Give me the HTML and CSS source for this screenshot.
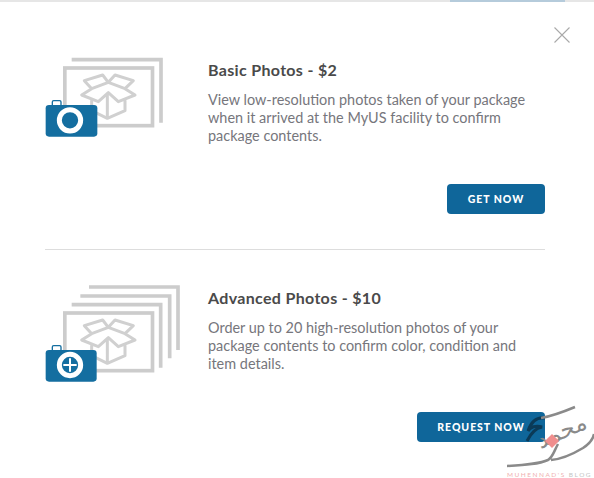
FILE: index.html
```html
<!DOCTYPE html>
<html lang="en">
<head>
<meta charset="utf-8">
<title>Photos</title>
<link rel="stylesheet" href="styles.css">
</head>
<body>
<div class="topbar"><span class="topbar-active"></span></div>
<main class="modal">
  <button class="close" aria-label="Close"><svg width="18" height="18" viewBox="0 0 18 18"><path d="M1.5 1.5 16.500 16.500M16.500 1.5 1.5 16.500" fill="none" stroke="#a9a9a9" stroke-width="1.1"/></svg></button>
  <section class="offer offer-basic">
    <svg class="art" width="120" height="85" viewBox="45 45 360 255">
      <path class="frame" d="M125 59H393V248" />
      <rect class="frame" x="104.500" y="84" width="263" height="173"/>
      <g class="box"><path d="M163 122 218 105 235 127 185 146ZM310 122 255 105 235 127 285 146ZM185 146 155 165 205 185 235 158 265 185 315 165 285 146M185 177V212L232 235 285 212V177M232 160V235"/></g>
      <path class="strap" d="M67 195V186Q67 182 71 182H89Q93 182 93 186V195"/>
      <rect class="cam" x="47" y="195" width="155" height="95" rx="10"/>
      <circle class="lens" cx="120" cy="241" r="32"/>
    </svg>
    <div class="copy">
      <h2>Basic Photos - $2</h2>
      <p>View low-resolution photos taken of your package when it arrived at the MyUS facility to confirm package contents.</p>
      <div class="actions"><a class="btn btn-get">GET NOW</a></div>
    </div>
  </section>
  <hr class="rule">
  <section class="offer offer-advanced">
    <svg class="art" width="137" height="103" viewBox="45 15 411 309">
      <path class="frame" d="M177 36H444V225M151 63H419V250M125 89H392V278"/>
      <rect class="frame" x="104.500" y="114" width="263" height="173"/>
      <g transform="translate(0 30)" class="box"><path d="M163 122 218 105 235 127 185 146ZM310 122 255 105 235 127 285 146ZM185 146 155 165 205 185 235 158 265 185 315 165 285 146M185 177V212L232 235 285 212V177M232 160V235"/></g>
      <path class="strap" d="M67 225V216Q67 212 71 212H89Q93 212 93 216V225"/>
      <rect class="cam" x="47" y="225" width="153" height="95" rx="10"/>
      <circle class="lens" cx="120" cy="270" r="32"/>
      <path class="plus" d="M120 250V290M100 270H140"/>
    </svg>
    <div class="copy">
      <h2>Advanced Photos - $10</h2>
      <p>Order up to 20 high-resolution photos of your package contents to confirm color, condition and item details.</p>
      <div class="actions"><a class="btn btn-request">REQUEST NOW</a></div>
    </div>
  </section>
</main>
<aside class="watermark">
  <svg class="wm-flourish" width="89" height="74" viewBox="0 0 89 74">
    <path class="wm-dark" d="M40 14C32 13 26 18 23 27C25 23 31 21 37 23C31 24 26 29 22 37" />
    <path class="wm-stroke" d="M2 62C22 61 34 60 43 56C48 53 49 47 53 40M36 14C48 12 58 8 70 3M46 56C58 55 68 50 78 44C84 40 88 36 89 30"/>
  </svg>
  <span class="wm-arabic" lang="ar" dir="rtl">محمد</span>
  <span class="wm-diamond"></span>
  <span class="wm-name"><b>MUHENNAD'S</b> BLOG</span>
</aside>
</body>
</html>
```
FILE: styles.css
```css
* { box-sizing: border-box; }
html, body { margin: 0; height: 100%; background: #fff; overflow: hidden; }
body { font-family: Lato, "Liberation Sans", sans-serif; position: relative; }
.topbar { height: 2px; background: #e6e6e6; padding-left: 450px; }
.topbar-active { display: block; width: 115px; height: 2px; background: #b5cbdb; }
.modal { padding: 0 49px 0 45px; }
.close { position: absolute; left: 553px; top: 26px; padding: 0; border: 0; background: none; line-height: 0; }
.offer { display: flex; align-items: flex-start; }
.offer-basic { padding-top: 53px; padding-bottom: 35px; }
.offer-advanced { padding-top: 30px; }
.art { flex: none; }
.offer-basic .art { margin-right: 43px; }
.offer-advanced .art { margin-right: 26px; }
.frame { fill: none; stroke: #cccccc; stroke-width: 11; }
.box path { fill: none; stroke: #d0d0d0; stroke-width: 9; stroke-linejoin: round; }
.strap { fill: none; stroke: #146ea0; stroke-width: 4; }
.cam { fill: #146ea0; }
.lens { fill: #146ea0; stroke: #fff; stroke-width: 15; }
.plus { stroke: #fff; stroke-width: 6; fill: none; }
.copy { flex: 1; min-width: 0; }
h2 { margin: 5px 0 0; font-size: 16px; line-height: 20px; font-weight: 700; color: #4a4a4a; letter-spacing: .33px; }
.offer-advanced h2 { margin-top: 8px; }
p { margin: 11px 0 0; font-size: 14.45px; line-height: 18px; color: #76767c; }
.actions { display: flex; justify-content: flex-end; margin-top: 39px; }
.btn { display: flex; align-items: center; justify-content: center; height: 30px; background: #0f669a; color: #fff; border-radius: 4px; font-size: 10.5px; font-weight: 900; letter-spacing: .95px; }
.btn-get { width: 98px; }
.btn-request { width: 128px; }
.rule { margin: 0; border: 0; height: 1px; background: #dddddd; }
.watermark { position: absolute; left: 505px; top: 404px; width: 89px; height: 74px; pointer-events: none; }
.wm-flourish { position: absolute; left: 0; top: 0; }
.wm-dark { fill: none; stroke: #0b3a57; stroke-width: 3; }
.wm-stroke { fill: none; stroke: #8a8a8a; stroke-width: 2.500; }
.wm-arabic { position: absolute; left: 30px; top: 13px; font-family: "DejaVu Sans", sans-serif; font-size: 23px; line-height: 28px; color: #8a8a8a; white-space: nowrap; transform: rotate(-24deg); }
.wm-diamond { position: absolute; left: 42px; top: 32px; width: 10px; height: 10px; background: #f08e8e; transform: rotate(45deg); }
.wm-name { position: absolute; left: 2px; top: 66px; font-size: 6.500px; line-height: 9px; letter-spacing: 1.500px; color: #c4c4c4; white-space: nowrap; }
.wm-name b { font-weight: 400; color: #efb0b0; }
```
